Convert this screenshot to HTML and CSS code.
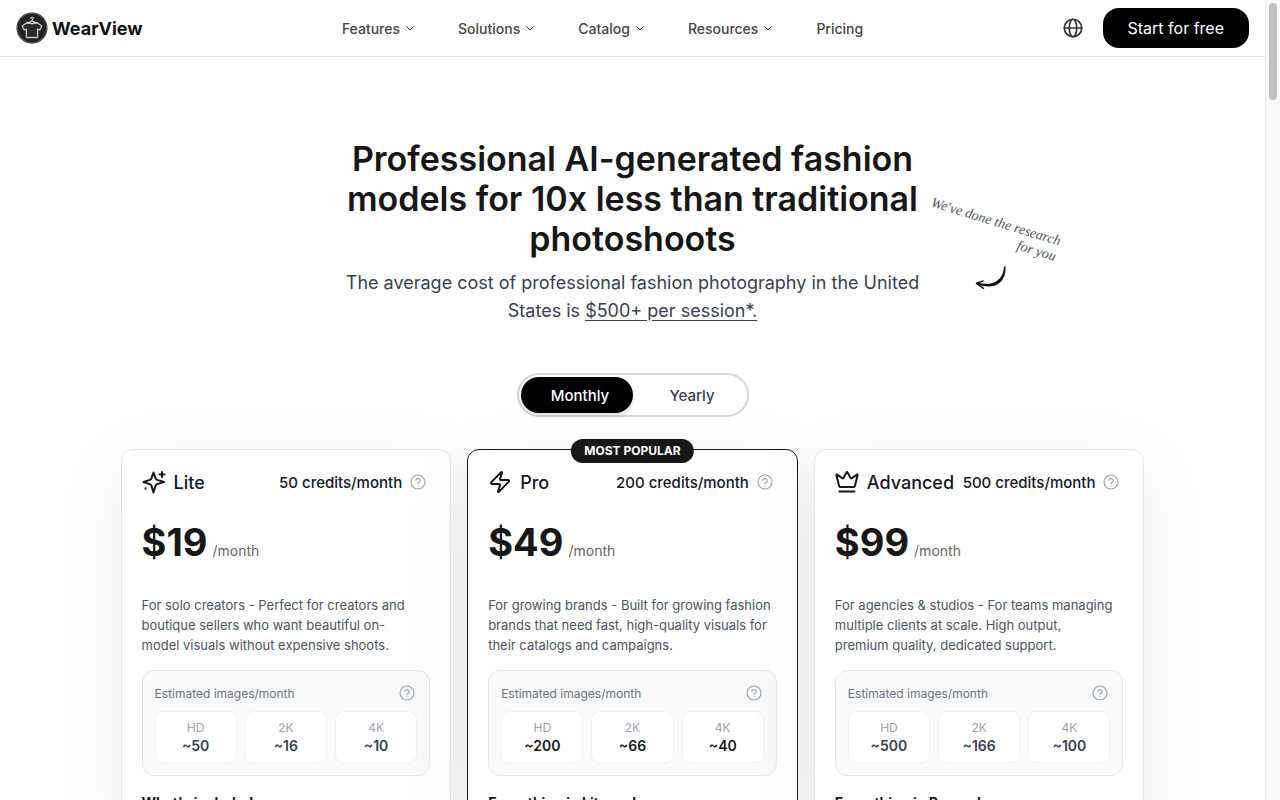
FILE: index.html
```html
<!DOCTYPE html>
<html lang="en">
<head>
<meta charset="utf-8">
<meta name="viewport" content="width=device-width, initial-scale=1">
<title>WearView Pricing</title>
<link rel="stylesheet" href="styles.css">
</head>
<body>
<svg class="sprite" aria-hidden="true">
  <symbol id="chevron" viewBox="0 0 24 24"><path d="m5 9 7 7 7-7"/></symbol>
  <symbol id="help" viewBox="0 0 24 24"><circle cx="12" cy="12" r="10.500"/><path d="M8.600 9.200a3.500 3.500 0 0 1 6.800 1.100c0 2.300-3.400 2.700-3.400 4M12 17.800h.01"/></symbol>
</svg>
<div class="page">
  <header class="topbar">
    <a class="brand" href="#">
      <svg class="brand-mark" viewBox="0 0 32 32" aria-hidden="true">
        <circle cx="16" cy="16" r="15.500" fill="#222"/>
        <circle cx="16" cy="16" r="14.800" fill="none" stroke="#777" stroke-width=".7"/>
        <path d="M11 10.500 6.200 14l2 4 2.200-1v8.500h11.200V17l2.200 1 2-4-4.800-3.500-3 .5-2 1-2-1z" fill="#292929" stroke="#c9c9c9" stroke-width="1.300" stroke-linejoin="round"/>
        <path d="M14.800 6.400c.2-1.600 2.600-1.400 2.400.2-.1.900-1.200.9-1.200 2.200l-4.500 2.400h9L16 8.800" fill="none" stroke="#ddd" stroke-width="1.100" stroke-linecap="round" stroke-linejoin="round"/>
      </svg>
      <span>WearView</span>
    </a>
    <nav class="nav">
      <button type="button">Features <svg class="icon"><use href="#chevron"/></svg></button>
      <button type="button">Solutions <svg class="icon"><use href="#chevron"/></svg></button>
      <button type="button">Catalog <svg class="icon"><use href="#chevron"/></svg></button>
      <button type="button">Resources <svg class="icon"><use href="#chevron"/></svg></button>
      <a href="#">Pricing</a>
    </nav>
    <div class="actions">
      <button class="globe" type="button" aria-label="Language">
        <svg class="icon" viewBox="0 0 24 24"><circle cx="12" cy="12" r="10.500"/><ellipse cx="12" cy="12" rx="4.500" ry="10.500"/><path d="M1.500 12h21"/></svg>
      </button>
      <a class="cta" href="#">Start for free</a>
    </div>
  </header>

  <main>
    <section class="hero">
      <h1>Professional AI-generated fashion<br>models for 10x less than traditional<br>photoshoots</h1>
      <p>The average cost of professional fashion photography in the United<br>States is <a href="#">$500+ per session*.</a></p>
      <div class="aside-note">
        <span>We've done the research<br>for you</span>
      </div>
      <svg class="aside-arrow" viewBox="0 0 32 26" aria-hidden="true"><path d="M29.800 1.500C30.500 15 22 25.500 2 18.500C20 22.500 29 15 29.800 1.500z"/><path d="M1.500 18.300l6.500-2.300M1.500 18.300l7 5"/></svg>
    </section>

    <div class="toggle">
      <button type="button" class="active" aria-pressed="true">Monthly</button>
      <button type="button" aria-pressed="false">Yearly</button>
    </div>

    <section class="plans">
      <article class="card">
        <div class="card-head">
          <svg class="icon plan-icon" viewBox="0 0 24 24"><path d="M11.500 2.500l2.100 5.900a2.500 2.500 0 0 0 1.500 1.500L22 12l-6.900 2.100a2.500 2.500 0 0 0-1.500 1.500L11.500 22.500l-2.100-6.900a2.500 2.500 0 0 0-1.500-1.500L1.500 12l6.400-2.100a2.500 2.500 0 0 0 1.500-1.500z"/><path d="M20 2v5M17.500 4.500h5M3.500 18.200v.6"/></svg>
          <h2>Lite</h2>
          <span class="credits">50 credits/month</span>
          <button type="button" class="help" aria-label="About credits"><svg class="icon"><use href="#help"/></svg></button>
        </div>
        <p class="price"><strong>$19</strong><span>/month</span></p>
        <p class="desc">For solo creators - Perfect for creators and<br>boutique sellers who want beautiful on-<br>model visuals without expensive shoots.</p>
        <div class="estimate">
          <div class="estimate-head"><span>Estimated images/month</span><button type="button" class="help" aria-label="About estimates"><svg class="icon"><use href="#help"/></svg></button></div>
          <dl class="tiles slate">
            <div><dt>HD</dt><dd>~50</dd></div>
            <div><dt>2K</dt><dd>~16</dd></div>
            <div><dt>4K</dt><dd>~10</dd></div>
          </dl>
        </div>
        <h3>What's included:</h3>
      </article>

      <article class="card popular">
        <span class="badge">MOST POPULAR</span>
        <div class="card-head">
          <svg class="icon plan-icon" viewBox="0 0 24 24"><path d="M4 14a1 1 0 0 1-.78-1.630l9.900-10.200a.5.5 0 0 1 .86.460l-1.920 6.020A1 1 0 0 0 13 10h7a1 1 0 0 1 .78 1.630l-9.900 10.200a.5.5 0 0 1-.86-.46l1.920-6.020A1 1 0 0 0 11 14z"/></svg>
          <h2>Pro</h2>
          <span class="credits">200 credits/month</span>
          <button type="button" class="help" aria-label="About credits"><svg class="icon"><use href="#help"/></svg></button>
        </div>
        <p class="price"><strong>$49</strong><span>/month</span></p>
        <p class="desc">For growing brands - Built for growing fashion<br>brands that need fast, high-quality visuals for<br>their catalogs and campaigns.</p>
        <div class="estimate">
          <div class="estimate-head"><span>Estimated images/month</span><button type="button" class="help" aria-label="About estimates"><svg class="icon"><use href="#help"/></svg></button></div>
          <dl class="tiles">
            <div><dt>HD</dt><dd>~200</dd></div>
            <div><dt>2K</dt><dd>~66</dd></div>
            <div><dt>4K</dt><dd>~40</dd></div>
          </dl>
        </div>
        <h3>Everything in Lite and:</h3>
      </article>

      <article class="card">
        <div class="card-head">
          <svg class="icon plan-icon" viewBox="0 0 24 24"><path d="M11.560 2.270a.5.5 0 0 1 .88 0L15.390 7.870a1 1 0 0 0 1.520.29L21.880 4.500a.5.5 0 0 1 .8.520l-2.830 11.250a1 1 0 0 1-.96.730H5.110a1 1 0 0 1-.96-.73L1.320 5.020a.5.5 0 0 1 .8-.52l4.970 3.660a1 1 0 0 0 1.520-.29zM4.500 21.500h15"/></svg>
          <h2>Advanced</h2>
          <span class="credits">500 credits/month</span>
          <button type="button" class="help" aria-label="About credits"><svg class="icon"><use href="#help"/></svg></button>
        </div>
        <p class="price"><strong>$99</strong><span>/month</span></p>
        <p class="desc">For agencies &amp; studios - For teams managing<br>multiple clients at scale. High output,<br>premium quality, dedicated support.</p>
        <div class="estimate">
          <div class="estimate-head"><span>Estimated images/month</span><button type="button" class="help" aria-label="About estimates"><svg class="icon"><use href="#help"/></svg></button></div>
          <dl class="tiles slate">
            <div><dt>HD</dt><dd>~500</dd></div>
            <div><dt>2K</dt><dd>~166</dd></div>
            <div><dt>4K</dt><dd>~100</dd></div>
          </dl>
        </div>
        <h3>Everything in Pro and:</h3>
      </article>
    </section>
  </main>
</div>
<div class="scrollbar" aria-hidden="true"><div class="thumb"></div></div>
</body>
</html>
```

FILE: styles.css
```css
* { box-sizing: border-box; }
body {
  margin: 0;
  height: 100vh;
  overflow: hidden;
  display: flex;
  background: #fff;
  color: #171717;
  font-family: Inter, "Liberation Sans", sans-serif;
}
h1, h2, h3, p, dl, dd { margin: 0; }
button { font: inherit; color: inherit; background: none; border: 0; padding: 0; cursor: pointer; }
a { color: inherit; text-decoration: none; }
.sprite { display: none; }
.icon { fill: none; stroke: currentColor; stroke-width: 2; stroke-linecap: round; stroke-linejoin: round; flex: none; display: block; }

.page { flex: 1; min-width: 0; }
.scrollbar { width: 15px; flex: none; padding: 3px 3px 0; background: #fafafa; border-left: 1px solid #e8e8e8; }
.thumb { width: 8px; height: 97px; margin-left: auto; border-radius: 4px; background: #c1c1c1; }

.topbar { display: flex; align-items: center; justify-content: space-between; height: 57px; padding: 0 16px; border-bottom: 1px solid #e2e2e2; }
.brand { display: flex; align-items: center; gap: 4px; font-size: 18px; font-weight: 700; color: #111; }
.brand-mark { width: 32px; height: 32px; }
.nav { display: flex; gap: 42px; font-size: 14px; font-weight: 500; color: #454545; }
.nav button { display: flex; align-items: center; gap: 4px; }
.nav .icon { width: 12px; height: 12px; color: #333; }
.actions { display: flex; align-items: center; gap: 20px; }
.globe .icon { width: 20px; height: 20px; color: #333; }
.cta { display: flex; align-items: center; height: 40px; padding: 0 25px; border-radius: 16px; background: #000; color: #fff; font-size: 16px; }

.hero { position: relative; width: 640px; max-width: 100%; margin: 0 auto; padding-top: 82px; text-align: center; white-space: nowrap; }
h1 { font-size: 34px; line-height: 40px; font-weight: 600; }
.hero p { margin-top: 10px; font-size: 18px; line-height: 28px; color: #374151; }
.hero p a { text-decoration: underline; text-underline-offset: 3px; }
.aside-note { position: absolute; left: 608px; top: 156px; width: 140px; transform: rotate(17deg); text-align: right; font: italic 14px/16px "Liberation Serif", serif; color: #4b5563; }
.aside-arrow { position: absolute; left: 662px; top: 208px; width: 32px; height: 26px; fill: #111; stroke: #111; stroke-width: 1.500; stroke-linecap: round; }

.toggle { display: flex; width: 232px; height: 44px; margin: 48px auto 0; padding: 2px; border: 2px solid #d4d6d8; border-radius: 22px; background: #fff; font-size: 15px; font-weight: 500; color: #374151; }
.toggle button { flex: 1; padding-left: 7px; border-radius: 18px; }
.toggle .active { background: #000; color: #fff; box-shadow: 0 2px 4px #0002; }

.plans { display: grid; grid-template-columns: repeat(3, 1fr); gap: 16px; max-width: 1024px; margin: 32px auto 0; }
.card { position: relative; min-width: 0; padding: 20px; border: 1px solid #e5e7eb; border-radius: 12px; background: #fff; box-shadow: 0 16px 72px rgba(0, 0, 0, .08); }
.plans .popular { border-color: #171717; }
.badge { position: absolute; top: -11px; left: 50%; transform: translateX(-50%); padding: 0 13px; border-radius: 12px; background: #171717; color: #fff; font-size: 12px; line-height: 24px; font-weight: 700; white-space: nowrap; }
.card-head { display: flex; align-items: center; height: 24px; color: #111827; white-space: nowrap; }
.plan-icon { width: 24px; height: 24px; color: #171717; }
h2 { margin-left: 8px; font-size: 18px; font-weight: 500; }
.credits { margin-left: auto; font-size: 15px; font-weight: 500; }
.help { margin: 0 4px 0 8px; color: #9ca3af; }
.help .icon { width: 16px; height: 16px; stroke-width: 1.800; }
.price { display: flex; align-items: baseline; gap: 5px; height: 48px; margin-top: 24px; line-height: 48px; }
.price strong { font-size: 38px; }
.price span { font-size: 14px; color: #666; }
.desc { margin-top: 29px; font-size: 13px; line-height: 20px; color: #4b5563; white-space: nowrap; }
.estimate { margin-top: 15px; padding: 12px; border: 1px solid #e2e6e9; border-radius: 12px; background: #f8fafb; }
.estimate-head { display: flex; align-items: center; justify-content: space-between; height: 20px; font-size: 12px; color: #6b7280; }
.estimate-head .help { margin-right: 2px; }
.tiles { display: grid; grid-template-columns: repeat(3, 1fr); gap: 8px; margin-top: 8px; text-align: center; }
.tiles div { padding: 7px 0; border: 1px solid #f0f2f4; border-radius: 8px; background: #fff; }
dt { font-size: 12px; line-height: 18px; color: #9ca3af; }
dd { font-size: 14px; line-height: 18px; font-weight: 600; }
.slate dd { color: #374151; }
h3 { margin-top: 17px; font-size: 14px; line-height: 20px; font-weight: 700; }
```
